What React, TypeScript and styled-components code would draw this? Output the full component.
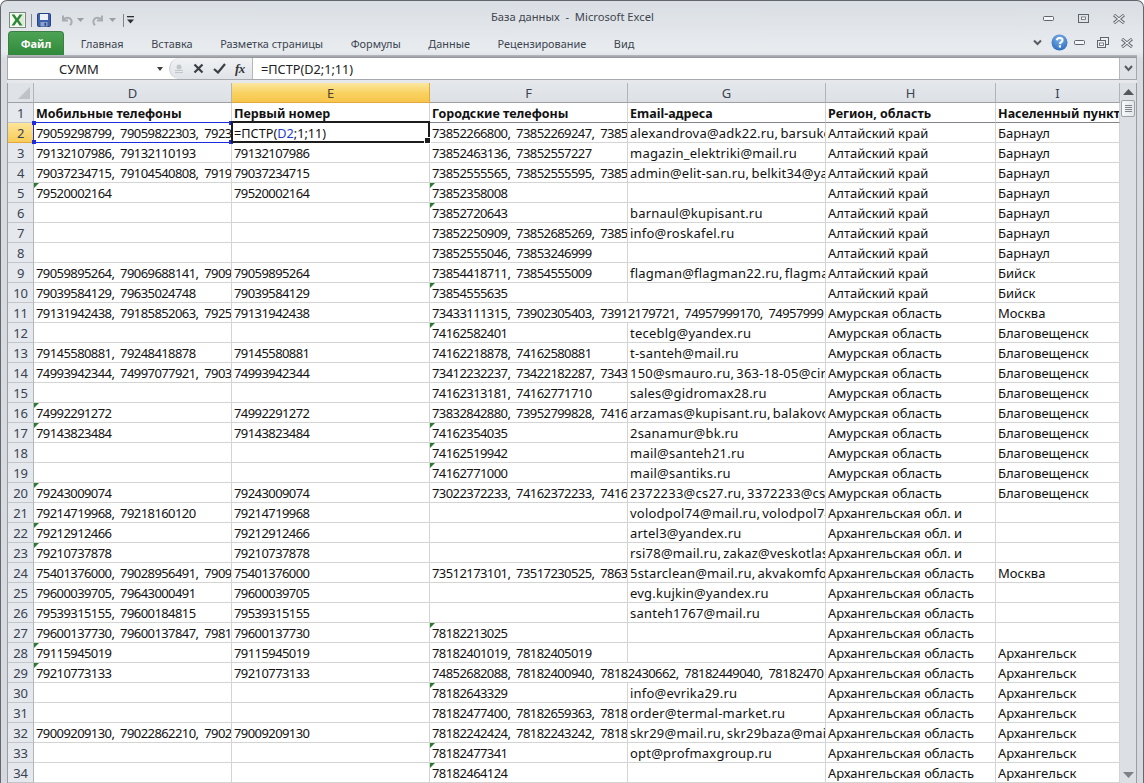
import React from "react";
import styled, { createGlobalStyle, css } from "styled-components";

const Global = createGlobalStyle`
  html, body { margin: 0; padding: 0; background: #fff; }
  #root { width: 1144px; height: 783px; overflow: hidden; }
`;

const uiFont = `"Noto Sans", "Open Sans", sans-serif`;

const Window = styled.div`
  box-sizing: border-box;
  width: 1144px;
  height: 783px;
  display: flex;
  flex-direction: column;
  padding: 0 6px;
  border: 1px solid #63676c;
  border-bottom: none;
  border-radius: 7px 7px 0 0;
  overflow: hidden;
  background: linear-gradient(#d9dee4 0, #e9ecef 50px, #d8dce1 58px, #d6dae0 100%);
  font-family: ${uiFont};
`;

const TitleBar = styled.div`
  flex: none;
  height: 29px;
  display: flex;
  align-items: center;
  position: relative;
`;

const Qat = styled.div`
  display: flex;
  align-items: center;
  width: 484px;
  padding: 9px 0 0 2px;
  box-sizing: border-box;
  flex: none;
`;

const QatSep = styled.div`
  width: 1px;
  height: 13px;
  background: #80858b;
  margin: 0 ${(p: { $gap?: number }) => p.$gap ?? 5}px;
`;

const QatSpace = styled.div<{ $w: number }>`
  width: ${(p) => p.$w}px;
  flex: none;
`;

const Title = styled.div`
  flex: none;
  width: 514px;
  padding-top: 2px;
  font-size: 11.2px;
  color: #3f4650;
  white-space: pre;
`;

const WinControls = styled.div`
  margin-left: auto;
  display: flex;
  align-items: center;
  gap: 24px;
  padding: 6px 12px 0 0;
`;

const TabRow = styled.div`
  flex: none;
  height: 25px;
  display: flex;
  align-items: flex-end;
  padding-left: 1px;
`;

const FileTab = styled.div`
  width: 56px;
  height: 24px;
  border-radius: 4px 4px 0 0;
  border: 1px solid #3b7f42;
  border-bottom: none;
  box-sizing: border-box;
  background: linear-gradient(#4ea355, #2f8a3a);
  color: #fff;
  font-weight: 700;
  font-size: 11px;
  display: flex;
  align-items: center;
  justify-content: center;
  margin-right: 3px;
`;

const Tab = styled.div`
  height: 23px;
  padding: 0 13.8px;
  font-size: 10.9px;
  color: #3c4450;
  display: flex;
  align-items: center;
`;

const RibbonRight = styled.div`
  margin-left: auto;
  align-self: center;
  display: flex;
  align-items: center;
  padding: 0 4px 0 0;
`;

const RibbonGap = styled.span<{ $w: number }>`
  width: ${(p) => p.$w}px;
  flex: none;
`;

const Strip = styled.div`
  flex: none;
  height: 3px;
  background: linear-gradient(#b8bcc1, #8f9398);
`;

const FormulaBar = styled.div`
  flex: none;
  height: 21px;
  display: flex;
  align-items: stretch;
  background: #fff;
  border-left: 1px solid #a5a9ae;
  border-right: 1px solid #a5a9ae;
`;

const NameBox = styled.div`
  width: 161px;
  flex: none;
  display: flex;
  align-items: center;
  position: relative;
  padding-left: 51px;
  box-sizing: border-box;
  font-size: 13px;
  color: #222;
`;

const NameArrow = styled.span`
  position: absolute;
  right: 6px;
  top: 9px;
  width: 0;
  height: 0;
  border-left: 3.5px solid transparent;
  border-right: 3.5px solid transparent;
  border-top: 4px solid #3c3c3c;
`;

const Bump = styled.div`
  width: 84px;
  flex: none;
  display: flex;
  align-items: center;
  background: linear-gradient(#f0f2f4, #e0e3e7);
  border-right: 1px solid #b5b9be;
  border-left: 1px solid #c7cbd0;
  border-radius: 12px 0 0 12px;
  padding-left: 4px;
  box-sizing: border-box;
  gap: 9px;
`;

const Formula = styled.div`
  flex: 1;
  padding-left: 8px;
  display: flex;
  align-items: center;
  font-size: 12.7px;
  color: #222;
`;

const Expand = styled.div`
  width: 16px;
  flex: none;
  background: #dfe2e6;
  border-left: 1px solid #b5b9be;
  display: flex;
  align-items: center;
  justify-content: center;
`;

const Gap = styled.div`
  flex: none;
  height: 4px;
  background: #e6e8eb;
  border-top: 1px solid #a5a9ae;
  box-sizing: border-box;
`;

const SheetArea = styled.div`
  flex: 1;
  min-height: 0;
  display: flex;
  border-left: 1px solid #9a9ea3;
  border-right: 1px solid #9a9ea3;
  background: #fff;
`;

const Grid = styled.div`
  display: grid;
  grid-template-columns: 26px 198px 198px 198px 198px 170px 124px;
  grid-auto-rows: 20px;
  width: 1112px;
  flex: none;
  font-family: ${uiFont};
  font-size: 13px;
  color: #111;
`;

const Corner = styled.div`
  background: #dfe3e8;
  border-right: 1px solid #b1b5ba;
  border-bottom: 1px solid #9da1a6;
  position: relative;
  &::after {
    content: "";
    position: absolute;
    right: 3px;
    bottom: 3px;
    width: 0;
    height: 0;
    border-left: 12px solid transparent;
    border-bottom: 12px solid #bfc3c8;
  }
`;

const ColHead = styled.div<{ $active?: boolean }>`
  background: ${(p) =>
    p.$active
      ? "linear-gradient(#fce7a0, #f9d15f 55%, #f7c64d)"
      : "linear-gradient(#e4e7eb, #dde1e6)"};
  border-right: 1px solid ${(p) => (p.$active ? "#e3a83b" : "#b1b5ba")};
  border-bottom: 1px solid ${(p) => (p.$active ? "#e3a83b" : "#9da1a6")};
  display: flex;
  align-items: center;
  justify-content: center;
  box-sizing: border-box;
  color: ${(p) => (p.$active ? "#4a4330" : "#3a4352")};
  font-size: 13px;
`;

const RowHead = styled.div<{ $active?: boolean }>`
  background: ${(p) =>
    p.$active ? "linear-gradient(#fde59a, #f8cc57)" : "#e5e8ec"};
  border-right: 1px solid ${(p) => (p.$active ? "#e3a83b" : "#b1b5ba")};
  border-bottom: 1px solid ${(p) => (p.$active ? "#e3a83b" : "#c2c6cb")};
  box-sizing: border-box;
  display: flex;
  align-items: center;
  justify-content: center;
  padding-top: 1px;
  color: #3a4352;
  font-size: 13px;
  letter-spacing: -0.2px;
`;

type CellKind = "num" | "mail" | "head" | "text";

const kindStyles: Record<CellKind, ReturnType<typeof css>> = {
  num: css`
    letter-spacing: -0.58px;
    word-spacing: 3px;
  `,
  mail: css`
    letter-spacing: 0.22px;
    word-spacing: -1.5px;
  `,
  head: css`
    font-size: 12.5px;
    font-weight: 700;
    border-bottom-color: #82868b;
  `,
  text: css``,
};

const Cell = styled.div<{
  $kind?: CellKind;
  $span?: number;
  $flag?: boolean;
}>`
  box-sizing: border-box;
  position: relative;
  grid-column: span ${(p) => p.$span ?? 1};
  border-right: 1px solid #d4d4d4;
  border-bottom: 1px solid #d4d4d4;
  padding: 2px 0 0 2px;
  line-height: 17px;
  white-space: pre;
  overflow: hidden;
  ${(p) => kindStyles[p.$kind ?? "text"]}
  &::before {
    content: "";
    display: ${(p) => (p.$flag ? "block" : "none")};
    position: absolute;
    left: 0;
    top: 0;
    width: 0;
    height: 0;
    border-top: 5px solid #2c7a32;
    border-right: 5px solid transparent;
  }
`;

const RangeCell = styled(Cell)`
  overflow: visible;
  z-index: 1;
`;

const ClipText = styled.div`
  overflow: hidden;
  height: 18px;
`;

const RangeBorder = styled.div`
  position: absolute;
  left: -1px;
  top: -1px;
  right: -1px;
  bottom: -1px;
  border: 1px solid #1d2ce0;
  pointer-events: none;
`;

const RangeHandle = styled.span<{ $x: "left" | "right"; $y: "top" | "bottom" }>`
  position: absolute;
  ${(p) => p.$x}: -2px;
  ${(p) => p.$y}: -2px;
  width: 4px;
  height: 4px;
  background: #1d2ce0;
`;

const ActiveCell = styled(Cell)`
  overflow: visible;
  z-index: 2;
  font-size: 12.7px;
`;

const ActiveBorder = styled.div`
  position: absolute;
  left: -1px;
  top: -2px;
  right: -1px;
  bottom: -1px;
  border: 2px solid #1c1c1c;
  pointer-events: none;
`;

const FillHandle = styled.span`
  position: absolute;
  right: -3px;
  bottom: -3px;
  width: 5px;
  height: 5px;
  background: #1c1c1c;
  border: 1px solid #fff;
`;

const Ref = styled.span`
  color: #1d3fd0;
`;

const Scroll = styled.div`
  width: 16px;
  flex: none;
  display: flex;
  flex-direction: column;
  align-items: center;
  background: #dce0e5;
`;

const ScrollBtn = styled.div`
  height: 17px;
  flex: none;
  display: flex;
  align-items: center;
  justify-content: center;
`;

const Thumb = styled.div`
  flex: none;
  width: 14px;
  height: 17px;
  box-sizing: border-box;
  border: 1px solid #9da2a8;
  border-radius: 2px;
  background: linear-gradient(90deg, #f7f8f9, #e3e6ea);
  display: flex;
  flex-direction: column;
  align-items: center;
  justify-content: center;
  gap: 1px;
`;

const Grip = styled.span`
  width: 7px;
  height: 1px;
  background: #7f848a;
`;

const ScrollFill = styled.div`
  flex: 1;
`;

const Minus = () => (
  <svg width="11" height="5" viewBox="0 0 11 5">
    <rect x="0.5" y="0.5" width="10" height="4" rx="1" fill="#f4f5f6" stroke="#5f656d" />
  </svg>
);
const Maxi = () => (
  <svg width="11" height="9" viewBox="0 0 11 9">
    <rect x="0.5" y="0.5" width="10" height="8" fill="none" stroke="#5f656d" />
    <rect x="3.5" y="3" width="4" height="2.5" fill="#fff" stroke="#5f656d" strokeWidth="0.8" />
  </svg>
);
const CloseX = () => (
  <svg width="12" height="10" viewBox="0 0 12 10">
    <path d="M1 1l10 8M11 1L1 9" stroke="#5f656d" strokeWidth="3" />
    <path d="M1.5 1.3l9 7.4M10.5 1.3l-9 7.4" stroke="#eef0f2" strokeWidth="1.2" />
  </svg>
);
const Restore = () => (
  <svg width="12" height="11" viewBox="0 0 12 11">
    <rect x="3.5" y="0.5" width="8" height="7" fill="#eef0f2" stroke="#5f656d" />
    <rect x="0.5" y="3.5" width="8" height="7" fill="#eef0f2" stroke="#5f656d" />
    <rect x="2.5" y="6" width="4" height="2.5" fill="#fff" stroke="#5f656d" strokeWidth="0.8" />
  </svg>
);
const Chevrons = () => (
  <svg width="9" height="7" viewBox="0 0 9 7">
    <path d="M1 1.500l3.500 3.500L8 1.500" fill="none" stroke="#565c64" strokeWidth="2" />
  </svg>
);
const Help = () => (
  <svg width="17" height="17" viewBox="0 0 17 17">
    <defs>
      <radialGradient id="hb" cx="50%" cy="30%" r="70%">
        <stop offset="0" stopColor="#7fb2ea" />
        <stop offset="1" stopColor="#2f6fc0" />
      </radialGradient>
    </defs>
    <circle cx="8.500" cy="8.500" r="8" fill="url(#hb)" />
    <path d="M5.700 6.200c.3-1.600 1.600-2.300 3-2.300 1.600 0 2.800.9 2.800 2.300 0 2-2.500 1.900-2.600 3.900" fill="none" stroke="#fff" strokeWidth="2" />
    <rect x="7.800" y="11.300" width="2.200" height="2.200" fill="#fff" />
  </svg>
);

const ExcelIcon = () => (
  <svg width="17" height="16" viewBox="0 0 17 16">
    <rect x="0.5" y="0.5" width="16" height="15" fill="#f5f8f3" stroke="#7c8a7c" />
    <rect x="10" y="2" width="5.500" height="12" fill="#dfe9da" />
    <path d="M2.500 2.500h3l2.500 3.800 2.500-3.800h3L9.700 8l3.800 5.500h-3L8 9.700l-2.500 3.800h-3L6.300 8z" fill="#2d8a36" />
  </svg>
);
const SaveIcon = () => (
  <svg width="14" height="14" viewBox="0 0 14 14">
    <rect x="0.5" y="0.5" width="13" height="13" rx="1" fill="#3d62ad" stroke="#2a4480" />
    <rect x="3" y="1" width="8" height="6" fill="#eef2f8" />
    <rect x="3.500" y="9" width="7" height="4.500" fill="#8fa4cc" />
    <rect x="7.500" y="9.800" width="1.600" height="3" fill="#2a4480" />
  </svg>
);
const UndoIcon = ({ flip }: { flip?: boolean }) => (
  <svg width="13" height="13" viewBox="0 0 13 13" style={flip ? { transform: "scaleX(-1)" } : undefined}>
    <path d="M3 1.500v5h5M3.400 6c1.600-2.600 6-3 7.600-.4 1 1.700.6 4-1 5.700" fill="none" stroke="#a8adb3" strokeWidth="2" />
  </svg>
);
const DownTri = ({ color = "#9aa0a6", m = 0 }: { color?: string; m?: number }) => (
  <svg width="7" height="4" viewBox="0 0 7 4" style={{ margin: `0 ${m}px` }}>
    <path d="M0 0h7L3.500 4z" fill={color} />
  </svg>
);
const Customize = () => (
  <svg width="7" height="8" viewBox="0 0 7 8">
    <rect x="0" y="0" width="7" height="1.300" fill="#2d3136" />
    <path d="M0 3.500h7L3.500 7.500z" fill="#2d3136" />
  </svg>
);
const BumpDots = () => (
  <svg width="10" height="10" viewBox="0 0 10 10">
    <circle cx="5" cy="3" r="2.500" fill="#c2c6cb" />
    <rect x="1" y="6" width="8" height="1" fill="#c2c6cb" />
    <rect x="1" y="8" width="8" height="1" fill="#c2c6cb" />
  </svg>
);
const CancelIcon = () => (
  <svg width="11" height="11" viewBox="0 0 11 11">
    <path d="M1.500 1.500l8 8M9.500 1.500l-8 8" stroke="#3b3f44" strokeWidth="2.200" />
  </svg>
);
const CheckIcon = () => (
  <svg width="13" height="11" viewBox="0 0 13 11">
    <path d="M1 6l4 3.500L12 1" fill="none" stroke="#3b3f44" strokeWidth="2.200" />
  </svg>
);
const FxLabel = styled.span`
  font-family: "Liberation Serif", serif;
  font-style: italic;
  font-weight: 700;
  font-size: 13px;
  color: #33373c;
  letter-spacing: -0.5px;
`;
const ExpandChevron = () => (
  <svg width="9" height="7" viewBox="0 0 9 7">
    <path d="M1 1l3.500 4L8 1" fill="none" stroke="#565c64" strokeWidth="2" />
  </svg>
);
const UpTri = () => (
  <svg width="11" height="6" viewBox="0 0 11 6">
    <path d="M5.500 0L11 6H0z" fill="#54585e" />
  </svg>
);
const DownTriBig = () => (
  <svg width="11" height="6" viewBox="0 0 11 6">
    <path d="M0 0h11L5.500 6z" fill="#7e8288" />
  </svg>
);

const A = "Алтайский край";
const M = "Амурская область";
const R = "Архангельская обл. и";
const O = "Архангельская область";
const B = "Барнаул";
const Bl = "Благовещенск";
const Ar = "Архангельск";

type Row = [string, string, string, string, string, string];

const rows: Row[] = [
  ["79059298799, 79059822303, 79230000000", "", "73852266800, 73852269247, 73852269248", "alexandrova@adk22.ru, barsukov@adk22.ru", A, B],
  ["79132107986, 79132110193", "79132107986", "73852463136, 73852557227", "magazin_elektriki@mail.ru", A, B],
  ["79037234715, 79104540808, 79190000000", "79037234715", "73852555565, 73852555595, 73852555596", "admin@elit-san.ru, belkit34@yandex.ru", A, B],
  ["79520002164", "79520002164", "73852358008", "", A, B],
  ["", "", "73852720643", "barnaul@kupisant.ru", A, B],
  ["", "", "73852250909, 73852685269, 73852685270", "info@roskafel.ru", A, B],
  ["", "", "73852555046, 73853246999", "", A, B],
  ["79059895264, 79069688141, 79090000000", "79059895264", "73854418711, 73854555009", "flagman@flagman22.ru, flagman@mail.ru", A, "Бийск"],
  ["79039584129, 79635024748", "79039584129", "73854555635", "", A, "Бийск"],
  ["79131942438, 79185852063, 79250000000", "79131942438", "73433111315, 73902305403, 73912179721, 74957999170, 74957999", "", M, "Москва"],
  ["", "", "74162582401", "teceblg@yandex.ru", M, Bl],
  ["79145580881, 79248418878", "79145580881", "74162218878, 74162580881", "t-santeh@mail.ru", M, Bl],
  ["74993942344, 74997077921, 79030000000", "74993942344", "73412232237, 73422182287, 73430000000", "150@smauro.ru, 363-18-05@cir.ru", M, Bl],
  ["", "", "74162313181, 74162771710", "sales@gidromax28.ru", M, Bl],
  ["74992291272", "74992291272", "73832842880, 73952799828, 74160000000", "arzamas@kupisant.ru, balakovo@kupisant.ru", M, Bl],
  ["79143823484", "79143823484", "74162354035", "2sanamur@bk.ru", M, Bl],
  ["", "", "74162519942", "mail@santeh21.ru", M, Bl],
  ["", "", "74162771000", "mail@santiks.ru", M, Bl],
  ["79243009074", "79243009074", "73022372233, 74162372233, 74160000000", "2372233@cs27.ru, 3372233@cs27.ru", M, Bl],
  ["79214719968, 79218160120", "79214719968", "", "volodpol74@mail.ru, volodpol74@yandex.ru", R, ""],
  ["79212912466", "79212912466", "", "artel3@yandex.ru", R, ""],
  ["79210737878", "79210737878", "", "rsi78@mail.ru, zakaz@veskotlas.ru", R, ""],
  ["75401376000, 79028956491, 79090000000", "75401376000", "73512173101, 73517230525, 78630000000", "5starclean@mail.ru, akvakomfort@mail.ru", O, "Москва"],
  ["79600039705, 79643000491", "79600039705", "", "evg.kujkin@yandex.ru", O, ""],
  ["79539315155, 79600184815", "79539315155", "", "santeh1767@mail.ru", O, ""],
  ["79600137730, 79600137847, 79810000000", "79600137730", "78182213025", "", O, ""],
  ["79115945019", "79115945019", "78182401019, 78182405019", "", O, Ar],
  ["79210773133", "79210773133", "74852682088, 78182400940, 78182430662, 78182449040, 78182470", "", O, Ar],
  ["", "", "78182643329", "info@evrika29.ru", O, Ar],
  ["", "", "78182477400, 78182659363, 78180000000", "order@termal-market.ru", O, Ar],
  ["79009209130, 79022862210, 79020000000", "79009209130", "78182242424, 78182243242, 78180000000", "skr29@mail.ru, skr29baza@mail.ru", O, Ar],
  ["", "", "78182477341", "opt@profmaxgroup.ru", O, Ar],
  ["", "", "78182464124", "", O, Ar],
];

const flagD = new Set([5, 16, 17, 20, 22, 23, 28, 29]);
const flagF = new Set([5, 6, 10, 12, 17, 18, 19, 27, 30, 33, 34]);
const wide = new Set([11, 29]);
const cols = ["D", "E", "F", "G", "H", "I"];
const heads = ["Мобильные телефоны", "Первый номер", "Городские телефоны", "Email-адреса", "Регион, область", "Населенный пункт"];

export default function App() {
  return (
    <Window>
      <Global />
      <TitleBar>
        <Qat>
          <ExcelIcon />
          <QatSep $gap={5} />
          <SaveIcon />
          <QatSpace $w={9} />
          <UndoIcon />
          <DownTri m={4} />
          <QatSpace $w={4} />
          <UndoIcon flip />
          <DownTri m={4} />
          <QatSep $gap={3} />
          <Customize />
        </Qat>
        <Title>База данных  -  Microsoft Excel</Title>
        <WinControls>
          <Minus />
          <Maxi />
          <CloseX />
        </WinControls>
      </TitleBar>
      <TabRow>
        <FileTab>Файл</FileTab>
        {["Главная", "Вставка", "Разметка страницы", "Формулы", "Данные", "Рецензирование", "Вид"].map((t) => (
          <Tab key={t}>{t}</Tab>
        ))}
        <RibbonRight>
          <Chevrons />
          <RibbonGap $w={9} />
          <Help />
          <RibbonGap $w={6} />
          <Minus />
          <RibbonGap $w={12} />
          <Restore />
          <RibbonGap $w={12} />
          <CloseX />
        </RibbonRight>
      </TabRow>
      <Strip />
      <FormulaBar>
        <NameBox>
          СУММ
          <NameArrow />
        </NameBox>
        <Bump>
          <BumpDots />
          <CancelIcon />
          <CheckIcon />
          <FxLabel>fx</FxLabel>
        </Bump>
        <Formula>=ПСТР(D2;1;11)</Formula>
        <Expand>
          <ExpandChevron />
        </Expand>
      </FormulaBar>
      <Gap />
      <SheetArea>
        <Grid>
          <Corner />
          {cols.map((c) => (
            <ColHead key={c} $active={c === "E"}>
              {c}
            </ColHead>
          ))}
          <RowHead>1</RowHead>
          {heads.map((h) => (
            <Cell key={h} $kind="head">
              {h}
            </Cell>
          ))}
          {rows.map((r, i) => {
            const n = i + 2;
            return (
              <React.Fragment key={n}>
                <RowHead $active={n === 2}>{n}</RowHead>
                {n === 2 ? (
                  <RangeCell $kind="num" $flag={flagD.has(n)}>
                    <ClipText>{r[0]}</ClipText>
                    <RangeBorder>
                      <RangeHandle $x="left" $y="top" />
                      <RangeHandle $x="right" $y="top" />
                      <RangeHandle $x="left" $y="bottom" />
                      <RangeHandle $x="right" $y="bottom" />
                    </RangeBorder>
                  </RangeCell>
                ) : (
                  <Cell $kind="num" $flag={flagD.has(n)}>
                    {r[0]}
                  </Cell>
                )}
                {n === 2 ? (
                  <ActiveCell>
                    =ПСТР(<Ref>D2</Ref>;1;11)
                    <ActiveBorder>
                      <FillHandle />
                    </ActiveBorder>
                  </ActiveCell>
                ) : (
                  <Cell $kind="num">{r[1]}</Cell>
                )}
                <Cell $kind="num" $flag={flagF.has(n)} $span={wide.has(n) ? 2 : 1}>
                  {r[2]}
                </Cell>
                {!wide.has(n) && <Cell $kind="mail">{r[3]}</Cell>}
                <Cell>{r[4]}</Cell>
                <Cell>{r[5]}</Cell>
              </React.Fragment>
            );
          })}
        </Grid>
        <Scroll>
          <ScrollBtn>
            <UpTri />
          </ScrollBtn>
          <Thumb>
            <Grip />
            <Grip />
            <Grip />
            <Grip />
          </Thumb>
          <ScrollFill />
          <ScrollBtn>
            <DownTriBig />
          </ScrollBtn>
        </Scroll>
      </SheetArea>
    </Window>
  );
}
